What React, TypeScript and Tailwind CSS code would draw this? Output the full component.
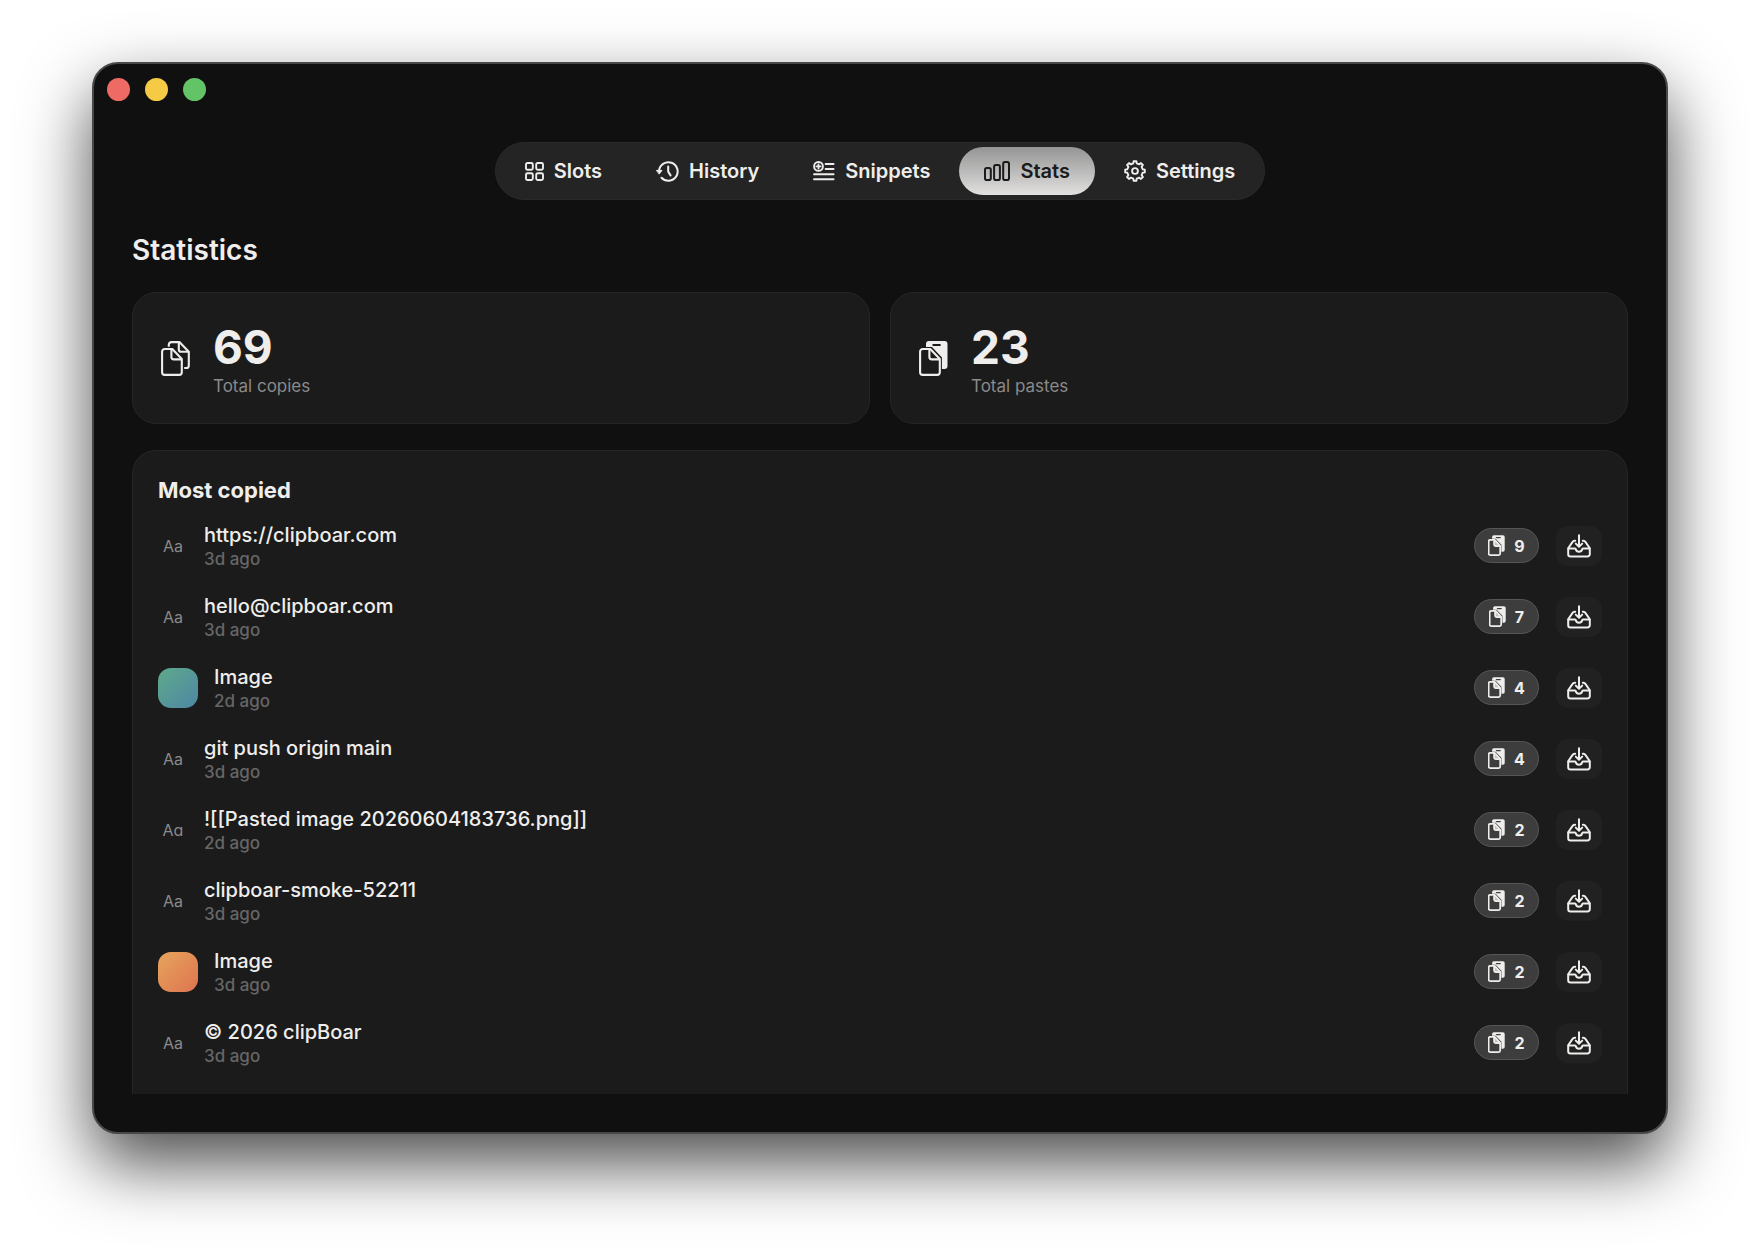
import type {ReactNode} from "react";

type tabType = {
    name: string;
    icon: ReactNode;
    active?: boolean;
}

type itemType = {
    title: string;
    age: string;
    count: number;
    thumb?: string;
    altGlyph?: boolean;
}

const SlotsIcon = () => (
    <svg width="19" height="19" viewBox="0 0 19 19" fill="none" stroke="currentColor" strokeWidth="1.9" aria-hidden="true">
        <rect x="1" y="1" width="6.8" height="6.8" rx="1.5"/>
        <rect x="11.2" y="1" width="6.8" height="6.8" rx="1.5"/>
        <rect x="1" y="11.2" width="6.8" height="6.8" rx="1.5"/>
        <rect x="11.2" y="11.2" width="6.8" height="6.8" rx="1.5"/>
    </svg>
)

const HistoryIcon = () => (
    <svg width="23" height="21" viewBox="0 0 23 21" fill="none" stroke="currentColor" strokeWidth="2" strokeLinecap="round" strokeLinejoin="round" aria-hidden="true">
        <path d="M3.1 9.4a9.3 9.3 0 1 1 2.4 7.4"/>
        <path d="M12.2 5.4v5.2l2.4 3.8"/>
        <path d="M.8 9.4h5.2l-2.6 3.4z" fill="currentColor" strokeWidth="1"/>
    </svg>
)

const SnippetsIcon = () => (
    <svg width="22" height="20" viewBox="0 0 22 20" fill="none" stroke="currentColor" strokeWidth="1.9" strokeLinecap="round" aria-hidden="true">
        <circle cx="5.5" cy="5.4" r="4.4"/>
        <path d="M5.5 3.4v4M3.5 5.4h4"/>
        <path d="M12.6 3h8M12.6 8h8M1 13.2h19.6M1 18.2h19.6"/>
    </svg>
)

const StatsIcon = () => (
    <svg width="26" height="20" viewBox="0 0 26 20" fill="none" stroke="currentColor" strokeWidth="2" aria-hidden="true">
        <rect x="1" y="7" width="5.8" height="12" rx="1.8"/>
        <rect x="10.1" y="4" width="5.8" height="15" rx="1.8"/>
        <rect x="19.2" y="1" width="5.8" height="18" rx="1.8"/>
    </svg>
)

// eight teeth, four points for each
const gearPoints = Array.from({length: 32}, (_, i) => {
    const tooth = Math.floor(i / 4);
    const offsets = [-13, -8, 8, 13];
    const radius = i % 4 === 0 || i % 4 === 3 ? 7.8 : 9.9;
    const angle = ((tooth * 45 + offsets[i % 4] - 90) * Math.PI) / 180;
    return `${(11 + radius * Math.cos(angle)).toFixed(2)},${(11 + radius * Math.sin(angle)).toFixed(2)}`;
}).join(" ");

const GearIcon = () => (
    <svg width="22" height="22" viewBox="0 0 22 22" fill="none" stroke="currentColor" strokeWidth="1.9" strokeLinejoin="round" aria-hidden="true">
        <polygon points={gearPoints}/>
        <circle cx="11" cy="11" r="2.9"/>
    </svg>
)

const CopiesIcon = () => (
    <svg width="29" height="35" viewBox="0 0 29 35" fill="none" stroke="currentColor" strokeWidth="2.1" strokeLinejoin="round" aria-hidden="true">
        <path d="M11.3 8H3.7A2.6 2.6 0 0 0 1.1 10.6v20.7A2.6 2.6 0 0 0 3.7 33.9h14.5a2.6 2.6 0 0 0 2.6-2.6V18z"/>
        <path d="M10.4 8.4v7.6a2.4 2.4 0 0 0 2.4 2.4h7.6"/>
        <path d="M7.8 5.8V3.7A2.6 2.6 0 0 1 10.4 1.1h8l9.4 9.7v13.6a2.6 2.6 0 0 1-2.6 2.6h-2"/>
        <path d="M17.8 1.4v7a2.4 2.4 0 0 0 2.4 2.4h7.2"/>
    </svg>
)

const PastesIcon = ({small = false}: {small?: boolean}) => (
    <svg width={small ? 17 : 29} height={small ? 21 : 35} viewBox="0 0 29 35" fill="none" strokeLinejoin="round" aria-hidden="true">
        <path
            fill="currentColor"
            fillRule="evenodd"
            d="M10 0h15.5a3 3 0 0 1 3 3v22a3 3 0 0 1-3 3h-2.600V16.400L13 5.900H7V3a3 3 0 0 1 3-3zM14.400 2.900a1.100 1.100 0 0 0 0 2.200h6.400a1.100 1.100 0 0 0 0-2.200z"
        />
        {small && <path fill="currentColor" fillOpacity="0.75" d="M10.4 8v10.4h10.4z"/>}
        <g stroke="currentColor" strokeWidth={small ? 3 : 2.1}>
            <path d="M11.3 8H3.7A2.6 2.6 0 0 0 1.1 10.6v20.7A2.6 2.6 0 0 0 3.7 33.9h14.5a2.6 2.6 0 0 0 2.6-2.6V18z"/>
            <path d="M10.4 8.4v7.6a2.4 2.4 0 0 0 2.4 2.4h7.6"/>
        </g>
    </svg>
)

const TrayIcon = () => (
    <svg width="24" height="24" viewBox="0 0 24 24" fill="none" stroke="currentColor" strokeWidth="2" strokeLinecap="round" strokeLinejoin="round" aria-hidden="true">
        <path d="M12 1.2v11.4M8.8 9.6l3.2 3.2 3.2-3.2"/>
        <path d="M8.2 6.8H7.6a2.4 2.4 0 0 0-2 1.1L1.2 14.3v5.9A2.3 2.3 0 0 0 3.5 22.5h17a2.3 2.3 0 0 0 2.3-2.3v-5.9l-4.4-6.4a2.4 2.4 0 0 0-2-1.1h-.6"/>
        <path d="M1.5 14.4h6.2c.6 0 .9.3 1.1.8a3.3 3.3 0 0 0 6.4 0c.2-.5.5-.8 1.1-.8h6.2"/>
    </svg>
)

const tabs: tabType[] = [
    {name: "Slots", icon: <SlotsIcon/>},
    {name: "History", icon: <HistoryIcon/>},
    {name: "Snippets", icon: <SnippetsIcon/>},
    {name: "Stats", icon: <StatsIcon/>, active: true},
    {name: "Settings", icon: <GearIcon/>},
];

const items: itemType[] = [
    {title: "https://clipboar.com", age: "3d ago", count: 9},
    {title: "hello@clipboar.com", age: "3d ago", count: 7},
    {title: "Image", age: "2d ago", count: 4, thumb: "from-[#5fa98a] to-[#4f86a3]"},
    {title: "git push origin main", age: "3d ago", count: 4},
    {title: "![[Pasted image 20260604183736.png]]", age: "2d ago", count: 2, altGlyph: true},
    {title: "clipboar-smoke-52211", age: "3d ago", count: 2},
    {title: "Image", age: "3d ago", count: 2, thumb: "from-[#e6a55c] to-[#dd7350]"},
    {title: "© 2026 clipBoar", age: "3d ago", count: 2},
];

const StatCard = ({icon, value, label}: {icon: ReactNode; value: number; label: string}) => (
    <div className="flex flex-1 items-center gap-[23px] rounded-3xl border border-[#252525] bg-[#1b1b1b] px-7 py-6">
        {icon}
        <div className="flex flex-col pt-1">
            <span className="text-[46px] leading-[52px] font-bold">{value}</span>
            <span className="text-[17px] leading-[26px] text-[#8a8a8a]">{label}</span>
        </div>
    </div>
)

const ItemRow = ({item}: {item: itemType}) => (
    <li className="flex h-[71px] items-center gap-4">
        {item.thumb ? (
            <div className={`size-10 rounded-[13px] bg-linear-to-br ${item.thumb}`}/>
        ) : (
            <span className={`w-[30px] text-center text-base text-[#8a8a8a] ${item.altGlyph ? "[font-feature-settings:'cv11']" : ""}`}>
                Aa
            </span>
        )}
        <div className="flex flex-1 flex-col pt-0.5">
            <span className="text-xl leading-6 font-medium">{item.title}</span>
            <span className="text-[17px] leading-6 font-medium text-[#666666]">{item.age}</span>
        </div>
        <div className="flex items-center gap-[17px]">
            <span className="flex h-[35px] w-[65px] items-center justify-center gap-[9px] rounded-full border border-[#565656] bg-[#3d3d3d] text-base font-bold">
                <PastesIcon small/>
                {item.count}
            </span>
            <button type="button" aria-label="Save to slot" className="flex h-10 w-[46px] items-center justify-center rounded-xl bg-[#212121]">
                <TrayIcon/>
            </button>
        </div>
    </li>
)

const App = () => {
    return (
        <div className="min-h-screen bg-white px-[92px] pt-[62px] pb-[122px] font-['Inter',sans-serif] text-[#efeeec]">
            <main className="rounded-[26px] border-2 border-[#484848] bg-[#101010] px-[38px] pb-[38px] shadow-[0_30px_68px_rgba(0,0,0,0.7)]">
                <div className="-mx-[25px] flex gap-[15px] pt-[14px]">
                    <button type="button" aria-label="Close" className="size-[23px] rounded-full bg-[#ed6a65]"/>
                    <button type="button" aria-label="Minimize" className="size-[23px] rounded-full bg-[#f5ca45]"/>
                    <button type="button" aria-label="Zoom" className="size-[23px] rounded-full bg-[#62c467]"/>
                </div>

                <nav className="mx-auto mt-[41px] flex w-fit gap-1 rounded-full border border-[#292929] bg-[#242424] p-1">
                    {tabs.map((tab) => (
                        <button
                            key={tab.name}
                            type="button"
                            className={`flex h-12 items-center gap-2.5 rounded-full px-[25px] text-xl font-semibold ${tab.active ? "bg-linear-to-b from-[#959595] to-[#e2e1e0] text-[#1b1b1b]" : ""}`}
                        >
                            {tab.icon}
                            {tab.name}
                        </button>
                    ))}
                </nav>

                <h1 className="mt-8 text-[28px] leading-9 font-semibold">Statistics</h1>

                <section className="mt-6 flex gap-5">
                    <StatCard icon={<CopiesIcon/>} value={69} label="Total copies"/>
                    <StatCard icon={<PastesIcon/>} value={23} label="Total pastes"/>
                </section>

                <section className="mt-[26px] rounded-t-3xl border border-b-0 border-[#252525] bg-[#1b1b1b] px-[25px] pt-[23px] pb-4">
                    <h2 className="text-[22px] leading-8 font-bold">Most copied</h2>
                    <ul className="mt-1">
                        {items.map((item, i) => (
                            <ItemRow key={i} item={item}/>
                        ))}
                    </ul>
                </section>
            </main>
        </div>
    )
}

export default App;
